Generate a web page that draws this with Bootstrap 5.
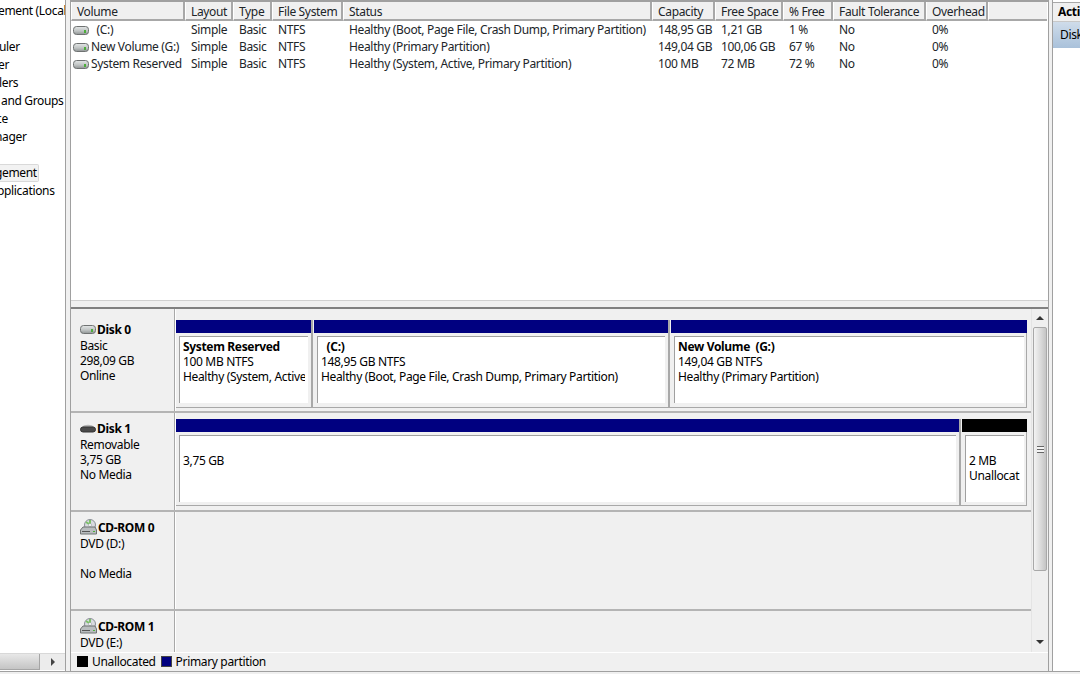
<!doctype html>
<html lang="en"><head><meta charset="utf-8"><title>Disk Management</title>
<link href="https://cdn.jsdelivr.net/npm/bootstrap@5.3.0/dist/css/bootstrap.min.css" rel="stylesheet">
<style>
html,body{height:674px;overflow:hidden}
body{font:12px/15px "Noto Sans","Liberation Sans",sans-serif;color:#000;background:#f0f0f0;letter-spacing:-.34px}
.shell{height:672px;border-bottom:1px solid #a0a0a0}
.tree{width:66px;flex:none;background:#fff;border-right:1px solid #a0a0a0}
.tree-list{padding-top:2px}
.tree-row{height:18px;line-height:18px;white-space:nowrap;overflow:hidden}
.tree-sel{display:block;width:39px;overflow:hidden;background:#f2f2f2;border:1px solid #d9d9d9;border-left:0;border-radius:0 2px 2px 0;height:18px;line-height:16px;text-indent:-5px}
.ti1{padding-left:1px}.tn1{text-indent:-1px}.ti2{text-indent:-2px}.ti3{text-indent:-3px}.ti4{text-indent:-4px}.ti5{text-indent:-5px}
.tree-hs{height:17px;background:#ececec;border-top:1px solid #d8d8d8;margin-bottom:1px}
.tree-thumb{width:40px;background:linear-gradient(#e8e8e8,#c4c4c4);border-right:1px solid #a5a5a5;border-bottom:1px solid #a5a5a5}
.arrow-r{width:0;height:0;border-left:4px solid #444;border-top:4px solid transparent;border-bottom:4px solid transparent;margin:4px 0 0 11px}
.gutter{width:3px;flex:none}
.gutter-l{width:4px;flex:none}
.mainp{width:979px;flex:none;border-left:1px solid #a0a0a0;border-right:1px solid #a0a0a0;border-top:2px solid #a0a0a0}
.vol{height:299px;background:#fff;overflow:hidden;flex:none;border-bottom:1px solid #d0d0d0}
.vol table{table-layout:fixed;width:976px;margin:0;--bs-table-bg:transparent;border-collapse:separate;border-spacing:0}
.vol th{font-weight:400;padding:2px 0 0 5px;background:#f0f0f0;border-right:2px solid #a8a8a8;border-bottom:2px solid #a8a8a8;border-left:1px solid #fff;line-height:15px;white-space:nowrap;overflow:hidden}
.vol th.blankh{border-right:0}
.vol td{height:17px;padding:0 0 0 6px;line-height:17px;white-space:nowrap;overflow:hidden;border:0}
.vol td.first{padding-left:2px}
.w1{width:114px}.w2{width:48px}.w3{width:39px}.w4{width:71px}.w5{width:309px}.w6{width:63px}.w7{width:68px}.w8{width:50px}.w9{width:93px}.w10{width:62px}
.hd{width:16px;height:9px;vertical-align:-1px;margin-right:2px}
.splitter{height:8px;flex:none;border-bottom:2px solid #808080;background:#f0f0f0}
.lower{flex:1;min-height:0}
.disks{flex:1;min-width:0;overflow:hidden}
.diskrow{flex:none;border-bottom:2px solid #b4b4b4}
.rh0{height:104px}.rh1{height:99px}.rh2{height:99px}.rh3{height:40px}
.dlabel{width:104px;flex:none;border-right:1px solid #a8a8a8;padding:7px 0 0 9px;box-shadow:1px 0 0 #fff;overflow:hidden}
.dlabel-first{padding-top:12px}
.dtitle{font-weight:700;display:flex;align-items:center;margin-bottom:1px;height:16px;white-space:nowrap}
.dtitle svg{margin-right:1px}
.lane{flex:1;padding:6px 0 0 1px;min-width:0}
.lane-first{padding-top:11px}
.pgrid{display:grid;column-gap:1px;width:851px;border-right:1px solid #a8a8a8;border-bottom:1px solid #a8a8a8;height:88px}
.gd0{grid-template-columns:137px 356px 356px}
.gd1{grid-template-columns:785px 65px;height:87px}
.pcell{display:flex;flex-direction:column;min-width:0;border-right:2px solid #a8a8a8}
.pcell:last-child{border-right:0}
.pbar{height:13px;flex:none;background:#000080}
.pbar-k{background:#000}
.pwrap{flex:1;padding:3px;min-height:0}
.pbox{height:67px;background:#fff;border-top:1px solid #a0a0a0;border-left:1px solid #a0a0a0;padding:2px 3px 0 3px}
.pbox-t{padding-top:17px}
.ptext{overflow:hidden;white-space:nowrap}
.bold{font-weight:700}
.vsb{width:17px;flex:none;background:#efefef;border-left:1px solid #e4e4e4;padding-top:7px}
.up{width:0;height:0;margin:0 auto;border-bottom:4px solid #333;border-left:4px solid transparent;border-right:4px solid transparent}
.dn{width:0;height:0;margin:0 auto 8px;border-top:4px solid #333;border-left:4px solid transparent;border-right:4px solid transparent}
.vthumb{height:244px;margin:7px 1px 0;background:linear-gradient(90deg,#f3f3f3,#d8d8d8 60%,#c4c4c4);border:1px solid #a8a8a8;border-radius:2px;flex:none}
.grip{width:7px;height:7px;background:linear-gradient(#666 0 1px,#f4f4f4 1px 3px,#666 3px 4px,#f4f4f4 4px 6px,#666 6px 7px)}
.legend{height:19px;flex:none;border-top:1px solid #fff;padding:0 0 2px 6px;gap:4px}
.sw{width:11px;height:11px;flex:none}
.swn{background:#000080;margin-left:1px;border:1px solid #444}
.swk{background:#000}
.actions{flex:1;min-width:0;background:#fff;border-left:1px solid #a0a0a0;overflow:hidden}
.acth{height:20px;margin-top:2px;background:#f0f0f0;border-top:1px solid #a8a8a8;border-bottom:1px solid #c8c8c8;font-weight:700;padding-left:5px;line-height:18px;white-space:nowrap;overflow:hidden}
.acts{height:26px;background:linear-gradient(#cfdcea,#a9c1da);padding-left:7px;line-height:26px;white-space:nowrap;overflow:hidden}
</style></head><body>
<svg width="0" height="0" class="position-absolute"><defs>
<linearGradient id="hg" x1="0" y1="0" x2="0" y2="1"><stop offset="0" stop-color="#e4e7e7"/><stop offset=".55" stop-color="#c0c4c4"/><stop offset="1" stop-color="#8f9494"/></linearGradient>
<symbol id="hdd" viewBox="0 0 16 9"><rect x=".5" y=".5" width="15" height="8" rx="3" fill="url(#hg)" stroke="#6f7272"/><rect x="11" y="4" width="2" height="3" fill="#4caf3a"/></symbol>
<symbol id="rem" viewBox="0 0 16 9"><path d="M2 3C4 0 12 0 14 3z" fill="#b5b5b5"/><rect x=".5" y="3" width="15" height="5" rx="2.5" fill="#4a4a4a" stroke="#333"/></symbol>
<symbol id="cd" viewBox="0 0 17 16"><circle cx="10" cy="6" r="5.5" fill="#d9dbe0" stroke="#8a8f96"/><path d="M10 1v4M6 3l3 2" stroke="#7cc267" stroke-width="2"/><circle cx="10" cy="6" r="1.5" fill="#fff" stroke="#8a8f96" stroke-width=".5"/><path d="M3 8h12l1.5 3v4h-16v-4z" fill="#b9bdbf" stroke="#6f7272"/><rect x="2" y="12" width="8" height="1" fill="#555"/><rect x="13" y="12" width="2" height="1" fill="#4caf3a"/></symbol>
</defs></svg>
<div class="shell d-flex">
 <aside class="tree d-flex flex-column">
  <div class="tree-list flex-grow-1">
   <div class="tree-row ti2">ement (Local</div><div class="tree-row"></div><div class="tree-row tn1">uler</div><div class="tree-row ti2">er</div><div class="tree-row tn1">lers</div><div class="tree-row ti1">and Groups</div><div class="tree-row ti4">ce</div><div class="tree-row ti5">nager</div><div class="tree-row"></div><div class="tree-row"><span class="tree-sel">gement</span></div><div class="tree-row ti3">pplications</div>
  </div>
  <div class="tree-hs d-flex"><div class="tree-thumb"></div><div class="arrow-r"></div></div>
 </aside>
 <div class="gutter-l"></div>
 <main class="mainp d-flex flex-column">
  <section class="vol">
   <table class="table table-borderless">
    <colgroup><col class="w1"><col class="w2"><col class="w3"><col class="w4"><col class="w5"><col class="w6"><col class="w7"><col class="w8"><col class="w9"><col class="w10"><col></colgroup>
    <thead><tr><th>Volume</th><th>Layout</th><th>Type</th><th>File System</th><th>Status</th><th>Capacity</th><th>Free Space</th><th>% Free</th><th>Fault Tolerance</th><th>Overhead</th><th class="blankh"></th></tr></thead>
    <tbody>
     <tr><td class="first"><svg class="hd"><use href="#hdd"/></svg> &nbsp;(C:)</td><td>Simple</td><td>Basic</td><td>NTFS</td><td>Healthy (Boot, Page File, Crash Dump, Primary Partition)</td><td>148,95 GB</td><td>1,21 GB</td><td>1 %</td><td>No</td><td>0%</td><td></td></tr>
     <tr><td class="first"><svg class="hd"><use href="#hdd"/></svg>New Volume (G:)</td><td>Simple</td><td>Basic</td><td>NTFS</td><td>Healthy (Primary Partition)</td><td>149,04 GB</td><td>100,06 GB</td><td>67 %</td><td>No</td><td>0%</td><td></td></tr>
     <tr><td class="first"><svg class="hd"><use href="#hdd"/></svg>System Reserved</td><td>Simple</td><td>Basic</td><td>NTFS</td><td>Healthy (System, Active, Primary Partition)</td><td>100 MB</td><td>72 MB</td><td>72 %</td><td>No</td><td>0%</td><td></td></tr>
    </tbody>
   </table>
  </section>
  <div class="splitter"></div>
  <div class="lower d-flex">
   <div class="disks d-flex flex-column">
    <div class="diskrow rh0 d-flex">
     <div class="dlabel dlabel-first"><div class="dtitle"><svg width="16" height="9"><use href="#hdd"/></svg>Disk 0</div>Basic<br>298,09 GB<br>Online</div>
     <div class="lane lane-first"><div class="pgrid gd0">
      <div class="pcell"><div class="pbar"></div><div class="pwrap"><div class="pbox"><div class="ptext"><div class="bold">System Reserved</div>100 MB NTFS<br>Healthy (System, Active</div></div></div></div>
      <div class="pcell"><div class="pbar"></div><div class="pwrap"><div class="pbox"><div class="ptext"><div class="bold">&nbsp; (C:)</div>148,95 GB NTFS<br>Healthy (Boot, Page File, Crash Dump, Primary Partition)</div></div></div></div>
      <div class="pcell"><div class="pbar"></div><div class="pwrap"><div class="pbox"><div class="ptext"><div class="bold">New Volume &nbsp;(G:)</div>149,04 GB NTFS<br>Healthy (Primary Partition)</div></div></div></div>
     </div></div>
    </div>
    <div class="diskrow rh1 d-flex">
     <div class="dlabel"><div class="dtitle"><svg width="16" height="9"><use href="#rem"/></svg>Disk 1</div>Removable<br>3,75 GB<br>No Media</div>
     <div class="lane"><div class="pgrid gd1">
      <div class="pcell"><div class="pbar"></div><div class="pwrap"><div class="pbox pbox-t"><div class="ptext">3,75 GB</div></div></div></div>
      <div class="pcell"><div class="pbar pbar-k"></div><div class="pwrap"><div class="pbox pbox-t"><div class="ptext">2 MB<br>Unallocat</div></div></div></div>
     </div></div>
    </div>
    <div class="diskrow rh2 d-flex">
     <div class="dlabel"><div class="dtitle"><svg width="17" height="16"><use href="#cd"/></svg>CD-ROM 0</div>DVD (D:)<br><br>No Media</div><div class="lane"></div>
    </div>
    <div class="rh3 d-flex flex-grow-1">
     <div class="dlabel"><div class="dtitle"><svg width="17" height="16"><use href="#cd"/></svg>CD-ROM 1</div>DVD (E:)</div><div class="lane"></div>
    </div>
   </div>
   <div class="vsb d-flex flex-column">
    <div class="up"></div>
    <div class="vthumb d-flex align-items-center justify-content-center"><div class="grip"></div></div>
    <div class="flex-grow-1"></div>
    <div class="dn"></div>
   </div>
  </div>
  <footer class="legend d-flex align-items-center"><span class="sw swk"></span><span>Unallocated</span><span class="sw swn"></span><span>Primary partition</span></footer>
 </main>
 <div class="gutter"></div>
 <aside class="actions"><div class="acth">Acti</div><div class="acts">Disk</div></aside>
</div>
</body></html>
